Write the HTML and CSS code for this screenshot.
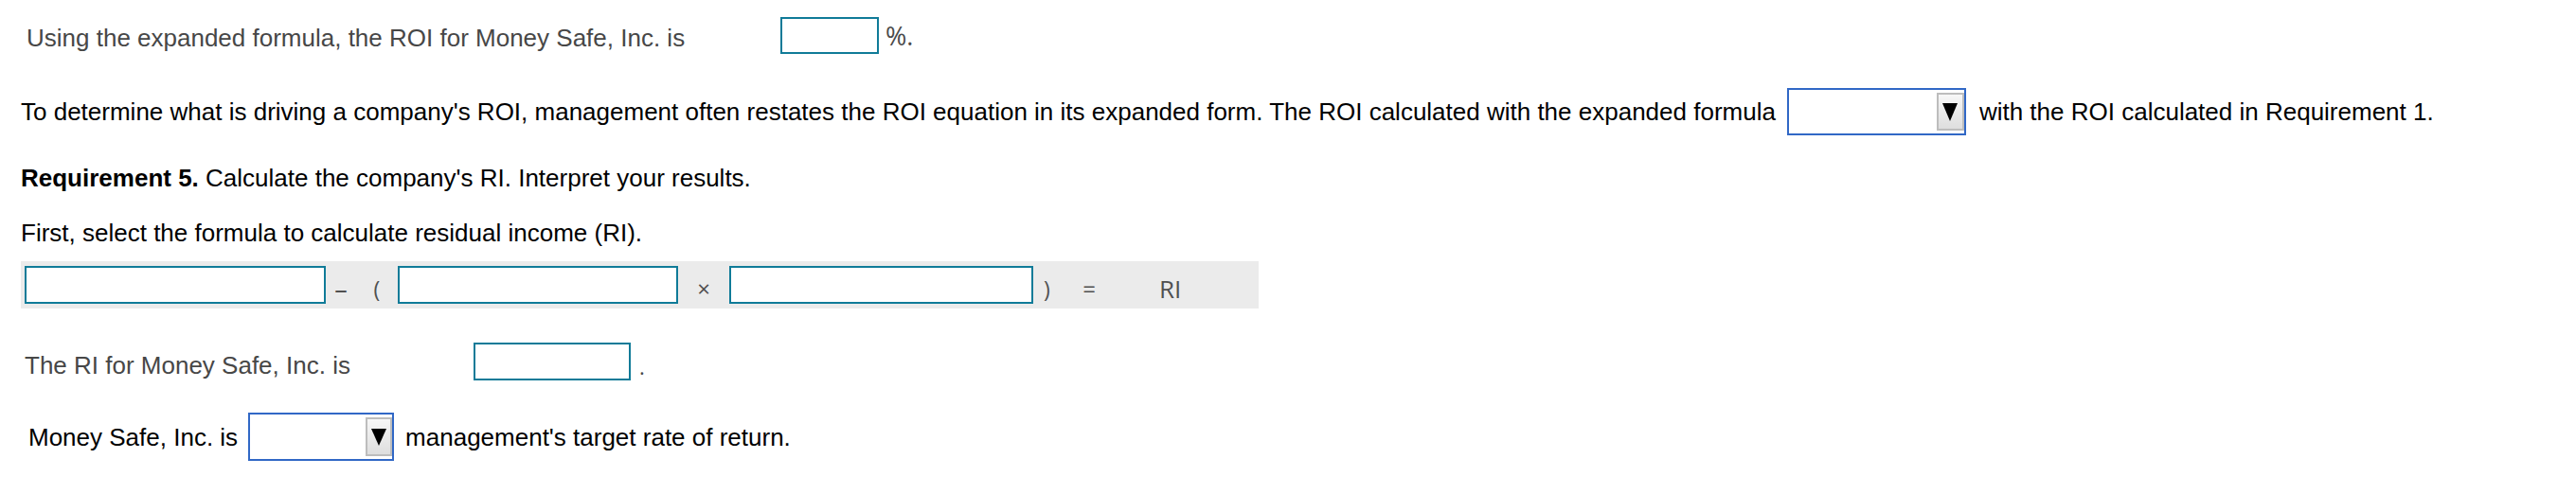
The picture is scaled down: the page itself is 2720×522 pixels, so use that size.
FILE: index.html
```html
<!DOCTYPE html>
<html>
<head>
<meta charset="utf-8">
<link rel="stylesheet" href="styles.css">
</head>
<body>
<div class="page">
  <div class="row r1">
    <span class="txt gray lbl1">Using the expanded formula, the ROI for Money Safe, Inc. is</span>
    <span class="ans ans-pct"></span>
    <span class="sym pct">%.</span>
  </div>

  <div class="row r2">
    <span class="txt">To determine what is driving a company's ROI, management often restates the ROI equation in its expanded form. The ROI calculated with the expanded formula</span>
    <span class="sel sel-wide"><span class="sel-btn"><svg viewBox="0 0 16 19" width="16" height="19"><polygon points="0,0 16,0 8,19" fill="#000"/></svg></span></span>
    <span class="txt after-sel">with the ROI calculated in Requirement 1.</span>
  </div>

  <div class="row r3">
    <span class="txt"><b>Requirement 5.</b> Calculate the company's RI. Interpret your results.</span>
  </div>

  <div class="row r4">
    <span class="txt">First, select the formula to calculate residual income (RI).</span>
  </div>

  <div class="bar">
    <span class="ans f1"></span>
    <span class="op minus">–</span>
    <span class="op lparen">(</span>
    <span class="ans f2"></span>
    <span class="op times">×</span>
    <span class="ans f3"></span>
    <span class="op rparen">)</span>
    <span class="op equals">=</span>
    <span class="op res">RI</span>
  </div>

  <div class="row r6">
    <span class="txt gray lbl6">The RI for Money Safe, Inc. is</span>
    <span class="ans ans-ri"></span>
    <span class="sym dot">.</span>
  </div>

  <div class="row r7">
    <span class="txt">Money Safe, Inc. is</span>
    <span class="sel sel-small"><span class="sel-btn"><svg viewBox="0 0 16 18" width="16" height="18"><polygon points="0,0 16,0 8,18" fill="#000"/></svg></span></span>
    <span class="txt after-sel2">management's target rate of return.</span>
  </div>
</div>
</body>
</html>
```

FILE: styles.css
```css
html, body {
  margin: 0;
  padding: 0;
  background: #fff;
}

.page {
  font-family: "Liberation Sans", Arial, sans-serif;
  font-size: 26px;
  color: #000;
  width: 2720px;
}

.row {
  display: flex;
  align-items: center;
  white-space: nowrap;
}

.txt {
  line-height: 30px;
}

.gray {
  color: #474747;
}

.ans {
  display: block;
  box-sizing: border-box;
  border: 2px solid #107b98;
  background: #fff;
  flex: none;
}

.sym {
  font-family: "Open Sans", "Liberation Sans", sans-serif;
  color: #4a4a4a;
}

/* row 1 */
.r1 {
  margin-top: 18px;
  height: 39px;
  padding-left: 28px;
}
.lbl1 {
  width: 796px;
  padding-top: 4px;
}
.ans-pct {
  width: 104px;
  height: 39px;
}
.pct {
  margin-left: 7px;
  font-size: 27px;
}

/* row 2 */
.r2 {
  margin-top: 36px;
  height: 50px;
  padding-left: 22px;
}
.sel {
  display: flex;
  justify-content: flex-end;
  align-items: center;
  box-sizing: border-box;
  border: 2px solid #3168c6;
  background: #fff;
  flex: none;
}
.sel-wide {
  width: 189px;
  height: 50px;
  margin-left: 12px;
}
.sel-btn {
  display: flex;
  align-items: center;
  justify-content: center;
  box-sizing: border-box;
  border: 2px solid #bdbdbd;
  background: linear-gradient(#f7f7f7, #dedede);
}
.sel-wide .sel-btn {
  width: 29px;
  height: 40px;
}
.after-sel {
  margin-left: 14px;
}

/* row 3, 4 */
.r3 {
  margin-top: 30px;
  height: 30px;
  padding-left: 22px;
}
.r4 {
  margin-top: 28px;
  height: 30px;
  padding-left: 22px;
}

/* formula bar */
.bar {
  display: flex;
  align-items: center;
  margin-top: 15px;
  margin-left: 22px;
  width: 1307px;
  height: 50px;
  background: #ebebeb;
  padding-left: 4px;
  box-sizing: border-box;
  font-family: "Open Sans", "Liberation Sans", sans-serif;
  color: #505050;
}
.bar .ans {
  height: 40px;
}
.f1 { width: 318px; }
.f2 { width: 296px; }
.f3 { width: 321px; }
.op {
  display: block;
  flex: none;
  text-align: center;
  padding-top: 8px;
  line-height: 30px;
  font-size: 24px;
}
.minus { width: 32px; font-size: 27px; }
.lparen { width: 44px; font-size: 23px; }
.times { width: 54px; font-size: 24px; }
.rparen { width: 29px; font-size: 23px; }
.equals { width: 60px; }
.res {
  text-align: left;
  padding-left: 44px;
  font-size: 26px;
}

/* row RI */
.r6 {
  margin-top: 36px;
  height: 40px;
  padding-left: 26px;
}
.lbl6 {
  width: 474px;
  padding-top: 8px;
}
.ans-ri {
  width: 166px;
  height: 40px;
}
.dot {
  margin-left: 9px;
  padding-top: 10px;
  font-size: 22px;
}

/* last row */
.r7 {
  margin-top: 34px;
  height: 51px;
  padding-left: 30px;
}
.sel-small {
  width: 154px;
  height: 51px;
  margin-left: 11px;
}
.sel-small .sel-btn {
  width: 28px;
  height: 41px;
}
.after-sel2 {
  margin-left: 12px;
}
```
